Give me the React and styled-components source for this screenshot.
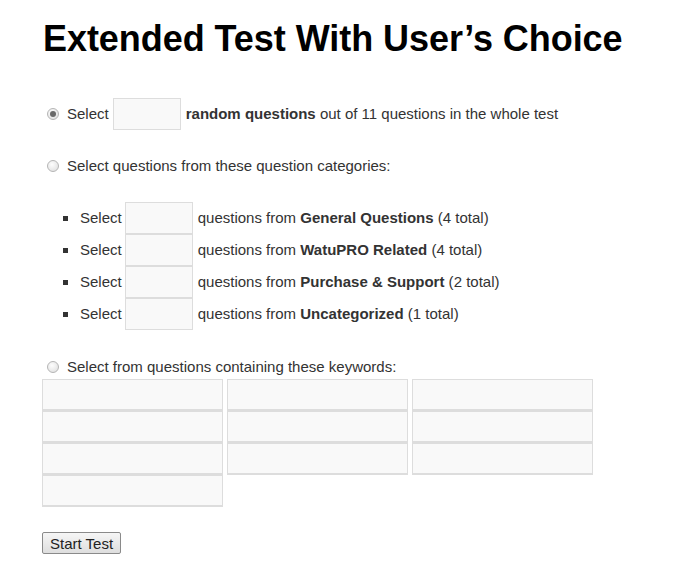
import styled, { createGlobalStyle } from "styled-components";

const Global = createGlobalStyle`
  body {
    margin: 0;
    background: #fff;
    font-family: "Liberation Sans", Arial, sans-serif;
    color: #333;
  }
`;

const Page = styled.div`
  padding: 0 0 20px 42px;
  width: 658px;
`;

const Title = styled.h1`
  margin: 17px 0 0 1px;
  font-size: 36px;
  line-height: 43px;
  font-weight: bold;
  letter-spacing: -0.05px;
  color: #000;
`;

const Option = styled.div`
  display: flex;
  align-items: center;
  gap: 4px;
  font-size: 15px;
  line-height: 20px;
  height: ${(p) => p.h || 20}px;
  margin-top: ${(p) => p.mt}px;
`;

const Radio = styled.input.attrs({ type: "radio" })`
  appearance: none;
  width: 12px;
  height: 12px;
  margin: 0 4px 0 5px;
  border-radius: 50%;
  border: 1px solid #b5b5b5;
  background: radial-gradient(circle at 40% 35%, #fdfdfd, #dcdcdc);
  position: relative;
  &:checked::after {
    content: "";
    position: absolute;
    left: 2px;
    top: 2px;
    width: 6px;
    height: 6px;
    border-radius: 50%;
    background: #6a6a6a;
  }
`;

const NumInput = styled.input`
  box-sizing: border-box;
  width: 68px;
  height: 32px;
  border: 1px solid #ddd;
  background: #f9f9f9;
  margin: 0 1px 0 0;
  padding: 0;
`;

const CatList = styled.ul`
  list-style: none;
  margin: 26px 0 0;
  padding: 0 0 0 20px;
`;

const CatItem = styled.li`
  display: flex;
  align-items: center;
  gap: 4px;
  height: 32px;
  font-size: 15px;
  line-height: 18px;
  position: relative;
  padding-left: 18px;
  & > input {
    margin-left: -1px;
  }
  &::before {
    content: "";
    position: absolute;
    left: 1px;
    top: 14px;
    width: 5px;
    height: 5px;
    background: #333;
  }
`;

const KeywordGrid = styled.div`
  display: grid;
  grid-template-columns: repeat(3, 180px);
  column-gap: 5px;
  margin-top: 2px;
`;

const KeywordInput = styled.input`
  box-sizing: border-box;
  width: 181px;
  height: 32px;
  border: 1px solid #ddd;
  border-bottom-width: 2px;
  background: #f9f9f9;
  margin: 0;
  padding: 0;
`;

const StartButton = styled.button`
  margin-top: 25px;
  height: 22px;
  padding: 0 7px;
  font-family: "Liberation Sans", Arial, sans-serif;
  font-size: 15px;
  color: #222;
  border: 1px solid #8a8a8a;
  border-radius: 2px;
  background: linear-gradient(#f6f6f6, #dedede);
`;

const categories = [
  ["General Questions", 4],
  ["WatuPRO Related", 4],
  ["Purchase & Support", 2],
  ["Uncategorized", 1],
];

export default function App() {
  return (
    <Page>
      <Global />
      <Title>Extended Test With User’s Choice</Title>
      <Option mt={38} h={32}>
        <Radio name="mode" defaultChecked />
        <span>Select</span>
        <NumInput />
        <span>
          <b>random questions</b> out of 11 questions in the whole test
        </span>
      </Option>
      <Option mt={26}>
        <Radio name="mode" />
        <span>Select questions from these question categories:</span>
      </Option>
      <CatList>
        {categories.map(([name, total]) => (
          <CatItem key={name}>
            <span>Select</span>
            <NumInput />
            <span>
              questions from <b>{name}</b> ({total} total)
            </span>
          </CatItem>
        ))}
      </CatList>
      <Option mt={27}>
        <Radio name="mode" />
        <span>Select from questions containing these keywords:</span>
      </Option>
      <KeywordGrid>
        {Array.from({ length: 10 }, (_, i) => (
          <KeywordInput key={i} />
        ))}
      </KeywordGrid>
      <StartButton>Start Test</StartButton>
    </Page>
  );
}
